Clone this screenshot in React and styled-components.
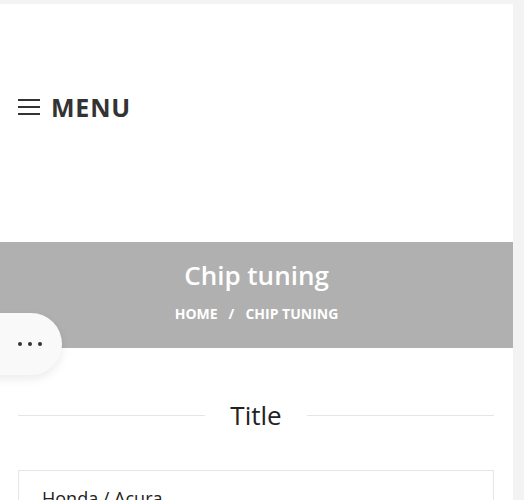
import React from "react";
import styled, { createGlobalStyle } from "styled-components";

const Global = createGlobalStyle`
  html, body { margin: 0; padding: 0; background: #f3f3f3; }
  body { font-family: "Open Sans", "Liberation Sans", sans-serif; overflow: hidden; }
  * { box-sizing: border-box; }
`;

const Page = styled.div`
  padding-top: 4px;
  padding-right: 11px;
  height: 500px;
  overflow: hidden;
`;

const Main = styled.div`
  background: #fff;
  position: relative;
  height: 496px;
`;

const Header = styled.header`
  height: 238px;
  display: flex;
  align-items: center;
  padding-left: 18px;
  padding-bottom: 32px;
`;

const MenuButton = styled.button`
  display: flex;
  align-items: center;
  gap: 11px;
  background: none;
  border: 0;
  padding: 0;
  color: #333;
  font-family: "Open Sans", sans-serif;
  font-weight: 700;
  font-size: 25px;
  letter-spacing: 0.8px;
  cursor: pointer;
`;

const Burger = styled.span`
  display: flex;
  flex-direction: column;
  gap: 5px;
  width: 22px;
  & > i {
    display: block;
    height: 2px;
    background: #333;
  }
`;

const Banner = styled.section`
  background: #b0b0b0;
  height: 106px;
  display: flex;
  flex-direction: column;
  align-items: center;
  padding-top: 13px;
  color: #fff;
`;

const BannerTitle = styled.h1`
  margin: 0;
  font-size: 26px;
  font-weight: 600;
  line-height: 40px;
`;

const Crumbs = styled.nav`
  margin-top: 9px;
  font-size: 14px;
  font-weight: 700;
  text-transform: uppercase;
  display: flex;
  gap: 11px;
  line-height: 20px;
`;

const Pill = styled.div`
  position: absolute;
  left: -40px;
  top: 309px;
  width: 102px;
  height: 62px;
  border-radius: 31px;
  background: #f9f9f9;
  box-shadow: 0 4px 10px rgba(0, 0, 0, 0.08);
  display: flex;
  align-items: center;
  justify-content: flex-end;
  padding-right: 20px;
  gap: 6px;
  & > i {
    width: 4px;
    height: 4px;
    border-radius: 50%;
    background: #333;
  }
`;

const Content = styled.div`
  padding: 50px 19px 0 18px;
`;

const SectionTitle = styled.div`
  display: flex;
  align-items: center;
  gap: 25px;
  &::before, &::after {
    content: "";
    flex: 1;
    height: 1px;
    background: #e6e6e6;
  }
`;

const TitleText = styled.h2`
  margin: 0;
  font-size: 26px;
  font-weight: 500;
  color: #222;
  line-height: 34px;
`;

const Card = styled.div`
  margin-top: 38px;
  border: 1px solid #e6e6e6;
  border-bottom: 0;
  padding: 14px 23px;
  height: 60px;
`;

const CardTitle = styled.div`
  font-size: 18px;
  color: #222;
  line-height: 26px;
`;

export default function App() {
  return (
    <>
      <Global />
      <Page>
        <Main>
          <Header>
            <MenuButton>
              <Burger><i /><i /><i /></Burger>
              MENU
            </MenuButton>
          </Header>
          <Banner>
            <BannerTitle>Chip tuning</BannerTitle>
            <Crumbs>
              <span>Home</span>
              <span>/</span>
              <span>Chip tuning</span>
            </Crumbs>
          </Banner>
          <Pill><i /><i /><i /></Pill>
          <Content>
            <SectionTitle>
              <TitleText>Title</TitleText>
            </SectionTitle>
            <Card>
              <CardTitle>Honda / Acura</CardTitle>
            </Card>
          </Content>
        </Main>
      </Page>
    </>
  );
}
